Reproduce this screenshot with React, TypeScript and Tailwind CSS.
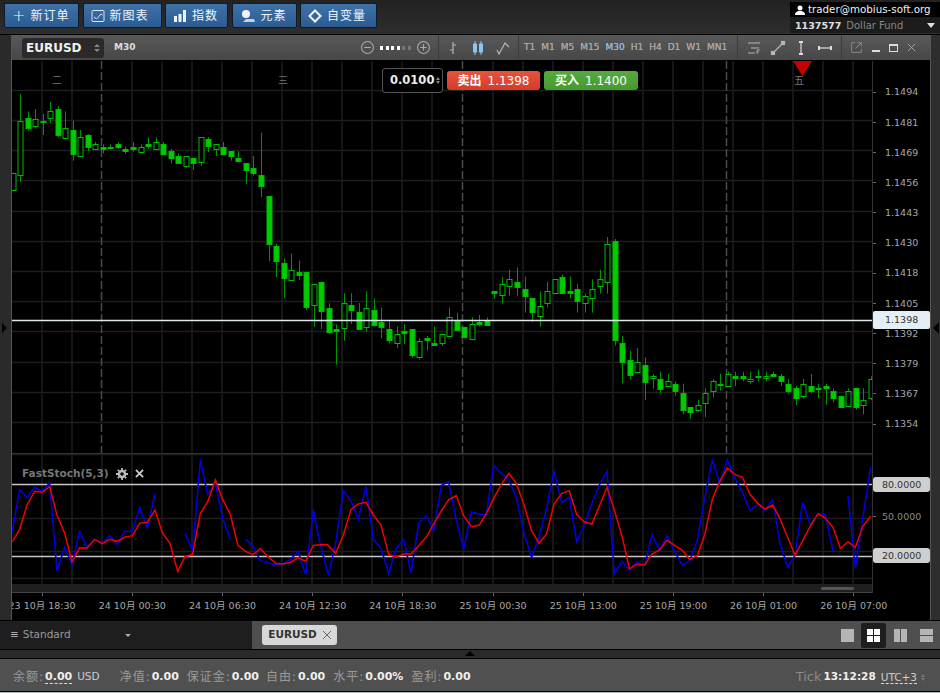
import React from "react";

const FONT = "font-['DejaVu_Sans','Noto_Sans_CJK_SC',sans-serif]";

// [wickTop, bodyTop, bodyBottom, wickBottom, filled] measured on 3x crops
type Candle = [number, number, number, number, number];

const firstRun: Candle[] = [
  [248, 248, 298, 298, 0], [12, 92, 254, 276, 0], [64, 85, 115, 122, 1], [57, 86, 106, 116, 0],
  [72, 92, 96, 135, 1], [36, 64, 85, 99, 0], [48, 56, 134, 141, 1], [64, 114, 143, 143, 0],
  [92, 120, 192, 212, 1], [120, 142, 200, 200, 0], [132, 134, 170, 183, 1], [156, 163, 179, 180, 0],
  [163, 170, 177, 190, 1], [163, 171, 175, 176, 1], [156, 162, 171, 177, 1], [170, 177, 182, 191, 1],
  [156, 170, 177, 185, 1], [163, 170, 185, 191, 0], [142, 163, 170, 177, 1], [142, 156, 177, 178, 0],
  [156, 163, 192, 194, 1], [177, 184, 206, 220, 1], [190, 198, 220, 221, 1], [198, 199, 228, 234, 0],
  [205, 205, 221, 240, 1], [141, 141, 215, 228, 0], [141, 148, 170, 186, 1], [163, 163, 178, 198, 0],
  [156, 170, 191, 192, 1], [184, 184, 200, 212, 1], [184, 205, 213, 215, 1], [220, 220, 241, 282, 1],
  [198, 234, 249, 257, 1], [128, 256, 290, 321, 1], [319, 319, 462, 513, 1], [462, 469, 513, 561, 1],
  [505, 518, 562, 625, 1], [490, 540, 569, 570, 0], [512, 546, 554, 570, 1],
];

const secondRun: Candle[] = [
  [126, 126, 232, 240, 1], [163, 163, 226, 291, 0], [155, 155, 241, 297, 1], [220, 233, 305, 311, 1],
  [283, 298, 305, 404, 1], [190, 220, 296, 332, 0], [190, 226, 242, 282, 1], [219, 247, 297, 297, 1],
  [184, 233, 290, 305, 0], [205, 240, 284, 290, 1], [233, 276, 290, 325, 1], [272, 298, 332, 340, 1],
  [290, 313, 340, 354, 0], [283, 304, 309, 342, 1], [298, 298, 375, 383, 1], [325, 333, 382, 389, 0],
  [318, 325, 332, 361, 1], [290, 340, 347, 347, 1], [313, 313, 340, 347, 0], [233, 262, 319, 319, 0],
  [248, 272, 298, 298, 1], [290, 290, 319, 325, 1], [262, 283, 327, 327, 0], [255, 276, 281, 290, 1],
  [262, 269, 284, 284, 1], [184, 184, 190, 206, 1], [140, 163, 197, 220, 0], [120, 148, 170, 197, 0],
  [112, 155, 170, 197, 1], [140, 177, 197, 248, 1], [205, 205, 248, 276, 1], [184, 227, 256, 290, 0],
  [155, 184, 219, 232, 0], [148, 148, 191, 191, 0], [134, 141, 190, 191, 1], [140, 183, 188, 205, 1],
  [162, 177, 212, 248, 1], [191, 198, 219, 248, 0], [148, 177, 205, 248, 0], [120, 148, 170, 191, 0],
  [21, 42, 155, 191, 0], [27, 34, 332, 347, 1],
];

const thirdRun: Candle[] = [
  [318, 340, 398, 460, 1], [362, 389, 434, 448, 1], [354, 397, 426, 426, 0], [382, 404, 454, 510, 1],
  [432, 439, 446, 476, 0], [425, 447, 476, 489, 1], [432, 454, 469, 469, 0], [454, 461, 482, 497, 1],
  [461, 489, 539, 553, 1], [532, 532, 548, 567, 1], [510, 525, 540, 546, 0], [475, 489, 518, 561, 0],
  [447, 454, 483, 502, 0], [432, 461, 465, 482, 1], [425, 432, 468, 468, 0], [425, 439, 446, 468, 1],
  [425, 439, 446, 454, 1], [425, 447, 454, 461, 0], [418, 439, 443, 454, 1], [425, 439, 446, 454, 0],
  [425, 432, 437, 440, 1], [432, 439, 455, 468, 1], [447, 461, 482, 490, 1], [468, 475, 505, 525, 1],
  [447, 461, 497, 505, 0], [432, 468, 483, 490, 1], [461, 475, 478, 505, 1], [461, 468, 473, 524, 1],
  [475, 482, 503, 518, 1], [497, 497, 531, 532, 1], [475, 482, 526, 526, 0], [475, 475, 533, 539, 1],
  [475, 511, 526, 553, 0], [439, 447, 505, 510, 0],
];

const candles = [
  ...firstRun.map((c, i) => ({ i, c, base: 90 })),
  ...secondRun.map((c, i) => ({ i: i + 39, c, base: 230 })),
  ...thirdRun.map((c, i) => ({ i: i + 81, c, base: 230 })),
];

const line = (pts: number[][], ox: number) =>
  pts.map(([x, y]) => `${ox + x / 3},${450 + y / 3}`).join(" ");

const blueLines = [
  line([[37,243],[59,119],[81,143],[104,112],[126,125],[149,98],[171,363],[194,292],[216,344],[239,244],[261,292],[284,268],[307,280],[329,257],[352,284],[374,244],[397,244],[419,172],[442,234],[465,132]], 0),
  line([[555,250],[578,300],[601,30],[623,133],[646,100],[668,205],[691,268]], 0),
  line([[738,268],[759,288],[781,332],[804,338],[827,345],[849,341],[872,328],[894,304],[917,374],[940,180],[961,284],[985,375],[1007,280],[1030,121],[1053,152],[1075,208],[1098,110],[1120,268],[1143,295],[1166,370],[1188,296],[1211,268],[1233,369],[1256,219],[1279,197],[1301,243],[1324,106],[1346,96],[1369,210],[1391,298],[1414,186],[1437,193],[1459,193],[1481,47],[1504,70],[1527,90],[1550,145],[1572,250],[1595,323],[1617,260],[1640,175],[1662,62],[1685,158],[1708,142],[1730,275],[1753,226],[1776,160],[1798,105],[1821,64],[1843,371],[1866,334],[1888,362],[1911,336],[1934,346],[1956,254],[1979,300],[2001,257],[2024,305],[2047,346],[2069,333],[2092,270],[2114,145],[2137,30],[2159,100],[2182,30],[2205,85],[2227,125],[2250,183],[2273,162],[2295,182],[2318,150],[2340,280],[2363,351],[2385,316],[2408,157],[2431,225],[2454,192],[2476,193],[2499,304]], 0),
  line([[684,137],[706,355],[729,200],[752,52]], 620),
];

const redLine = line([[37,275],[59,238],[81,165],[104,124],[126,127],[149,110],[171,195],[194,250],[216,335],[239,293],[261,294],[284,268],[307,281],[329,268],[352,274],[374,262],[397,257],[419,220],[442,217],[465,180],[487,248],[510,280],[533,364],[555,320],[578,313],[601,190],[623,155],[646,90],[668,148],[691,193],[714,287],[738,305],[759,314],[781,296],[804,320],[827,340],[849,342],[872,337],[894,323],[917,334],[940,286],[961,284],[983,284],[1007,310],[1030,255],[1053,178],[1075,162],[1098,157],[1120,195],[1143,225],[1166,313],[1188,321],[1211,312],[1233,312],[1256,287],[1279,261],[1301,222],[1324,183],[1346,149],[1369,137],[1391,197],[1414,230],[1437,226],[1459,191],[1481,145],[1504,103],[1527,70],[1550,102],[1572,165],[1595,243],[1617,280],[1640,252],[1662,162],[1685,131],[1708,122],[1730,193],[1753,216],[1776,222],[1798,168],[1821,112],[1843,180],[1866,258],[1888,356],[1911,343],[1934,345],[1956,312],[1979,300],[2001,271],[2024,286],[2047,301],[2069,328],[2092,317],[2114,255],[2137,148],[2159,95],[2182,54],[2205,74],[2227,81],[2250,133],[2273,160],[2295,177],[2318,165],[2340,206],[2363,262],[2385,316],[2408,272],[2431,228],[2454,191],[2476,204],[2499,232],[2521,295],[2544,276],[2566,292],[2589,228],[2612,199]], 0);

const verticals = [42, 72, 132, 162, 192, 222, 252, 282, 312, 342, 372, 402, 432, 493, 523, 553, 583, 613, 643, 673, 703, 733, 763, 793, 823, 853];
const dashed = [102, 463, 727];
const mainRows = [91, 121, 151, 181, 212, 242, 272, 302, 332, 363, 393, 423];
const prices = ["1.1494", "1.1481", "1.1469", "1.1456", "1.1443", "1.1430", "1.1418", "1.1405", "1.1392", "1.1379", "1.1367", "1.1354"];
const timeLabels = ["23 10月 18:30", "24 10月 00:30", "24 10月 06:30", "24 10月 12:30", "24 10月 18:30", "25 10月 00:30", "25 10月 13:00", "25 10月 19:00", "26 10月 01:00", "26 10月 07:00"];
const frames = ["T1", "M1", "M5", "M15", "M30", "H1", "H4", "D1", "W1", "MN1"];

const TopButton = ({ label, icon, width }: { label: string; icon: React.ReactNode; width: string }) => (
  <button className={`${width} h-[25px] flex items-center gap-[5px] pl-[7px] border border-[#0d1a2a] rounded-[2px] bg-gradient-to-b from-[#3f72a8] to-[#2b5b91] text-[#f0f4f8] text-[12px]`}>
    {icon}
    <span className="tracking-[1px]">{label}</span>
  </button>
);

const MainChart = () => (
  <svg viewBox="12 61 860 392" className="block w-[860px] h-[392px]">
    {verticals.map((x) => <line key={x} x1={x} x2={x} y1={61} y2={453} stroke="#1e1e1e" strokeWidth={1.5} />)}
    {mainRows.map((y) => <line key={y} x1={12} x2={872} y1={y - 0.5} y2={y - 0.5} stroke="#1e1e1e" strokeWidth={1.5} />)}
    {dashed.map((x) => <line key={x} x1={x - 0.5} x2={x - 0.5} y1={61} y2={453} stroke="#4a4a4a" strokeWidth={1.5} strokeDasharray="8 3" />)}
    {candles.map(({ i, c, base }) => {
      const x = Math.round(12.5 + i * 7.53) + 0.5;
      const [wt, bt, bb, wb, filled] = c;
      return (
        <g key={i} stroke="#00bb00" fill={filled ? "#00cc00" : "#000"}>
          <line x1={x} x2={x} y1={base + wt / 3} y2={base + wb / 3} strokeWidth={1} opacity={0.8} />
          <rect x={x - 2.5} y={Math.round(base + bt / 3) + 0.5} width={5} height={Math.max(1, Math.round((bb - bt) / 3))} strokeWidth={1} />
        </g>
      );
    })}
    <line x1={12} x2={872} y1={320.5} y2={320.5} stroke="#dfe8ea" strokeWidth={1.6} />
    <polygon points="793,61 812,61 802.5,76" fill="#c40000" />
  </svg>
);

const IndicatorChart = () => (
  <svg viewBox="12 454 860 130" className="block w-[860px] h-[130px]">
    {verticals.concat([102, 463]).map((x) => <line key={x} x1={x} x2={x} y1={454} y2={584} stroke="#1e1e1e" strokeWidth={1.5} />)}
    {[454.5, 518.5, 551.5, 578.5].map((y) => <line key={y} x1={12} x2={872} y1={y} y2={y} stroke="#1e1e1e" strokeWidth={1.5} />)}
    <line x1={12} x2={872} y1={484.5} y2={484.5} stroke="#c8c8c8" strokeWidth={1.4} />
    <line x1={12} x2={872} y1={556.5} y2={556.5} stroke="#c8c8c8" strokeWidth={1.4} />
    {blueLines.map((pts, i) => <polyline key={i} points={pts} fill="none" stroke="#0000e6" strokeWidth={1.5} />)}
    <polyline points={redLine} fill="none" stroke="#f00000" strokeWidth={1.5} />
  </svg>
);

const Marker = ({ text, left }: { text: string; left: string }) => (
  <span className={`absolute ${left} top-[15px] text-[10px] leading-none text-[#777]`}>{text}</span>
);

const ToolIcon = ({ children, className }: { children: React.ReactNode; className?: string }) => (
  <svg viewBox="0 0 16 16" className={`w-4 h-4 ${className ?? ""}`} fill="none" stroke="#b5b5b5" strokeWidth="1.2">{children}</svg>
);

const AxisTick = () => <span className="w-[3px] h-px bg-[#666] mr-[9px]" />;

export default function App() {
  return (
    <div className={`w-[940px] h-[693px] flex flex-col overflow-hidden bg-[#2b2b2b] ${FONT}`}>
      {/* top bar */}
      <div className="h-[35px] shrink-0 flex justify-between bg-gradient-to-b from-[#222] to-[#2e2e2e] border-b border-black">
        <div className="flex gap-[3.5px] pl-[4px] pt-[3px]">
          <TopButton width="w-[75px]" label="新订单" icon={<span className="text-[16px] leading-none font-light">+</span>} />
          <TopButton width="w-[79px]" label="新图表" icon={
            <svg viewBox="0 0 14 14" className="w-[14px] h-[14px]" fill="none" stroke="#dbe6f0"><rect x="1" y="1.5" width="12" height="11" rx="1" /><path d="M3 8l2.5 2L10 5l1.5 1" /></svg>
          } />
          <TopButton width="w-[63px]" label="指数" icon={
            <svg viewBox="0 0 14 14" className="w-[14px] h-[14px]" fill="#f0f4f8"><rect x="1" y="7" width="3" height="6" /><rect x="5.5" y="5" width="3" height="8" /><rect x="10" y="1" width="3" height="12" /></svg>
          } />
          <TopButton width="w-[65px]" label="元素" icon={
            <svg viewBox="0 0 16 14" className="w-[16px] h-[14px]" fill="#f0f4f8"><circle cx="6" cy="5" r="4" /><path d="M6 10h8l1 3H3z" fill="#c5d3e0" /></svg>
          } />
          <TopButton width="w-[77px]" label="自变量" icon={
            <svg viewBox="0 0 14 14" className="w-[14px] h-[14px]" fill="none" stroke="#f0f4f8" strokeWidth="2"><path d="M7 1.5L12.5 7 7 12.5 1.5 7z" /></svg>
          } />
        </div>
        <div className="w-[150px] mt-[2px] h-[31px] bg-black flex flex-col pl-[5px] text-[10px] leading-[15px]">
          <div className="flex items-center gap-[3px] text-[#f2f2f2] h-[15px] whitespace-nowrap text-[10.3px]">
            <svg viewBox="0 0 10 10" className="w-[10px] h-[10px]" fill="#fff"><circle cx="5" cy="3" r="2.5" /><path d="M0 10c0-3 2-4 5-4s5 1 5 4z" /></svg>
            <span>trader@mobius-soft.org</span>
          </div>
          <div className="flex items-center h-[16px] bg-[#1c1c1c] -ml-[5px] pl-[5px] pr-[5px]">
            <span className="font-bold text-[9.5px] text-[#e0e0e0]">1137577</span>
            <span className="ml-[5px] text-[#888]">Dollar Fund</span>
            <span className="ml-auto w-0 h-0 border-x-[4px] border-x-transparent border-t-[5px] border-t-[#ddd]" />
          </div>
        </div>
      </div>

      {/* workspace */}
      <div className="h-[585px] shrink-0 flex">
        <div className="w-[12px] shrink-0 flex items-center border-r border-[#555] bg-[#2a2a2a]">
          <span className="ml-[2px] w-0 h-0 border-y-[5px] border-y-transparent border-l-[5px] border-l-black" />
        </div>
        <div className="w-[918px] shrink-0 flex flex-col">
          {/* window toolbar */}
          <div className="h-[26px] shrink-0 flex items-center bg-gradient-to-b from-[#595959] to-[#474747] text-[#aaa] border-b border-black">
            <div className="ml-[10px] w-[82px] h-[20px] rounded-[3px] bg-[#2a2a2a] flex items-center justify-between pl-[4px] pr-[4px]">
              <span className="text-[12px] font-bold text-[#f0f0f0]">EURUSD</span>
              <span className="flex flex-col gap-[2px]">
                <span className="w-0 h-0 border-x-[3px] border-x-transparent border-b-[3px] border-b-[#888]" />
                <span className="w-0 h-0 border-x-[3px] border-x-transparent border-t-[3px] border-t-[#888]" />
              </span>
            </div>
            <span className="ml-[10px] w-[247px] text-[9px] font-bold text-[#ddd]">M30</span>
            <div className="w-[77px] flex items-center gap-[6px]">
              <svg viewBox="0 0 12 12" className="w-[13px] h-[13px]" fill="none" stroke="#aaa"><circle cx="6" cy="6" r="5.5" /><path d="M3 6h6" /></svg>
              <span className="flex gap-[2.5px]">
                {["#fff", "#fff", "#fff", "#fff", "#777", "#777"].map((c, i) => (
                  <span key={i} className="w-[3px] h-[4px]" style={{ backgroundColor: c }} />
                ))}
              </span>
              <svg viewBox="0 0 12 12" className="w-[13px] h-[13px]" fill="none" stroke="#aaa"><circle cx="6" cy="6" r="5.5" /><path d="M3 6h6M6 3v6" /></svg>
            </div>
            <div className="h-full flex items-center gap-[9px] pl-[6px] w-[80px] border-l border-[#3d3d3d]">
              <ToolIcon><path d="M8 2v12M8 5h3M5 10h3" /></ToolIcon>
              <svg viewBox="0 0 16 16" className="w-4 h-4" fill="#8fc4ee" stroke="#8fc4ee"><path d="M5 1v14M11 1v14" /><rect x="3.5" y="4" width="3" height="8" /><rect x="9.5" y="4" width="3" height="8" /></svg>
              <ToolIcon><path d="M2 10l2 4 6-11 4 4" /></ToolIcon>
            </div>
            <div className="h-full w-[219px] flex items-center gap-[6px] pl-[5px] border-l border-[#3d3d3d] text-[9px] text-[#a8a8a8] [text-shadow:0_0_0.5px_#a8a8a8]">
              {frames.map((f) => <span key={f} className={f === "M30" ? "text-[#8fc0ea]" : ""}>{f}</span>)}
            </div>
            <div className="h-full w-[104px] flex items-center justify-around border-l border-[#3d3d3d] pl-[4px] pr-[4px]">
              <ToolIcon><path d="M2 3h12M5 8h8M2 13h7" /><path d="M11 10v4M11 10h3M11 12h2" strokeWidth="0.8" /></ToolIcon>
              <ToolIcon><path d="M3 13L13 3" /><rect x="1.5" y="11.5" width="3" height="3" fill="#b5b5b5" /><rect x="11.5" y="1.5" width="3" height="3" fill="#b5b5b5" /></ToolIcon>
              <ToolIcon><path d="M8 3v10" stroke="#ddd" /><path d="M6 2h4M6 14h4" stroke="#ddd" strokeWidth="2" /></ToolIcon>
              <ToolIcon><path d="M3 8h10" stroke="#ddd" /><path d="M2 6v4M14 6v4" stroke="#ddd" strokeWidth="2" /></ToolIcon>
            </div>
            <div className="h-full flex-1 flex items-center gap-[9px] pl-[8px] border-l border-[#3d3d3d]">
              <ToolIcon className="w-[13px] h-[13px]"><path d="M6 2H2v12h12v-4M9 2h5v5M14 2L7 9" stroke="#888" /></ToolIcon>
              <span className="mt-[6px] w-[8px] h-[2px] bg-[#ddd]" />
              <span className="w-[9px] h-[8px] border border-t-2 border-[#ddd]" />
              <svg viewBox="0 0 10 10" className="w-[9px] h-[9px]" stroke="#aaa"><path d="M1 1l8 8M9 1l-8 8" /></svg>
            </div>
          </div>

          {/* chart area */}
          <div className="flex-1 flex flex-col bg-black relative">
            <div className="flex shrink-0">
              <div className="w-[860px] shrink-0 flex flex-col">
                <MainChart />
                <div className="border-t border-[#333] relative">
                  <IndicatorChart />
                  <div className="absolute left-[10px] top-[12px] flex items-center gap-[7px] text-[10.5px] font-bold text-[#777]">
                    <span>FastStoch(5,3)</span>
                    <svg viewBox="0 0 12 12" className="w-[12px] h-[12px]" fill="none" stroke="#bbb" strokeWidth="2.5"><circle cx="6" cy="6" r="3" /><path d="M6 0v2M6 10v2M0 6h2M10 6h2M1.8 1.8l1.4 1.4M8.8 8.8l1.4 1.4M1.8 10.2l1.4-1.4M8.8 3.2l1.4-1.4" strokeWidth="1.8" /></svg>
                    <svg viewBox="0 0 10 10" className="w-[9px] h-[9px]" stroke="#ccc" strokeWidth="2"><path d="M1 1l8 8M9 1l-8 8" /></svg>
                  </div>
                </div>
                <div className="h-[9px] bg-[#1f1f1f] flex items-center justify-end pr-[18px] border-b border-[#444]">
                  <span className="w-[33px] h-[3px] rounded-full bg-[#555]" />
                </div>
              </div>

              {/* price axis */}
              <div className="flex-1 flex flex-col border-l border-[#333]">
                <div className="h-[392px] pt-[16px] shrink-0 text-[9.5px] text-[#a8a8a8] relative">
                  {prices.map((p) => (
                    <div key={p} className="h-[30.2px] flex items-center leading-none">
                      <AxisTick />{p}
                    </div>
                  ))}
                  <div className="absolute left-0 right-0 top-[250px] h-[18px] rounded-[2px] bg-[#e3eff4] text-[#333] flex items-center pl-[12px]">1.1398</div>
                </div>
                <div className="h-[130px] shrink-0 relative text-[9.5px] text-[#888]">
                  <div className="absolute left-0 right-0 top-[24px] h-[15px] rounded-[3px] bg-[#cfcfcf] text-[#333] pl-[9px] leading-[15px]">80.0000</div>
                  <div className="absolute left-0 top-[56px] flex items-center leading-[15px]"><span className="w-[3px] h-px bg-[#666] mr-[6px]" />50.0000</div>
                  <div className="absolute left-0 right-0 top-[95px] h-[15px] rounded-[3px] bg-[#cfcfcf] text-[#333] pl-[9px] leading-[15px]">20.0000</div>
                </div>
              </div>
            </div>

            {/* time axis runs under the price column too */}
            <div className="flex-1 overflow-hidden">
              <div className="flex -ml-[15px] text-[9.5px] text-[#a8a8a8] whitespace-nowrap">
                {timeLabels.map((t) => (
                  <div key={t} className="w-[90.2px] shrink-0 flex flex-col items-center">
                    <span className="w-px h-[3px] bg-[#666] mb-[3px]" />
                    <span>{t}</span>
                  </div>
                ))}
              </div>
            </div>

            {/* order panel over the chart */}
            <div className="absolute left-[370px] top-[7px] flex items-center gap-[4px]">
              <div className="w-[61px] h-[25px] rounded-[3px] border border-[#555] bg-black text-[#eee] text-[11.5px] font-bold flex items-center pl-[7px]">
                <span>0.0100</span>
                <span className="ml-[2px] flex flex-col gap-[1px]">
                  <span className="w-0 h-0 border-x-[2px] border-x-transparent border-b-[3px] border-b-[#888]" />
                  <span className="w-0 h-0 border-x-[2px] border-x-transparent border-t-[3px] border-t-[#888]" />
                </span>
              </div>
              <div className="w-[93px] h-[19px] rounded-[3px] bg-gradient-to-b from-[#e8533d] to-[#d23c2b] text-white text-[12px] flex items-center justify-center gap-[6px]">
                <span className="font-bold">卖出</span><span>1.1398</span>
              </div>
              <div className="w-[94px] h-[19px] rounded-[3px] bg-gradient-to-b from-[#55ab3e] to-[#46992f] text-white text-[12px] flex items-center justify-center gap-[6px]">
                <span className="font-bold">买入</span><span>1.1400</span>
              </div>
            </div>
            <Marker text="二" left="left-[40px]" />
            <Marker text="三" left="left-[266px]" />
            <Marker text="五" left="left-[782px]" />
          </div>
        </div>
        <div className="flex-1 flex items-center justify-end border-l border-[#555] bg-[#2e2e2e] pr-[1px]">
          <span className="w-0 h-0 border-y-[6px] border-y-transparent border-r-[6px] border-r-black" />
        </div>
      </div>

      {/* tabs */}
      <div className="h-[30px] shrink-0 flex border-y border-black bg-[#4f4f4f]">
        <div className="w-[252px] bg-[#1e1e1e] flex items-center pl-[10px] text-[10.5px] text-[#9a9a9a]">
          <span className="mr-[4px] text-[#bbb]">≡</span>
          <span>Standard</span>
          <span className="ml-[54px] w-0 h-0 border-x-[3px] border-x-transparent border-t-[3px] border-t-[#aaa]" />
        </div>
        <div className="flex-1 flex items-center pl-[10px]">
          <div className="w-[75px] h-[20px] rounded-[3px] bg-[#d8d8d8] flex items-center justify-center gap-[6px] text-[10.5px] font-bold text-[#333]">
            <span>EURUSD</span>
            <svg viewBox="0 0 8 8" className="w-[8px] h-[8px]" stroke="#666"><path d="M0 0l8 8M8 0L0 8" /></svg>
          </div>
          <div className="ml-auto flex items-center pr-[7px] gap-[7px]">
            <span className="w-[13px] h-[13px] bg-[#b5b5b5]" />
            <span className="w-[25px] h-[25px] rounded-[2px] bg-[#1e1e1e] flex items-center justify-center">
              <span className="grid grid-cols-2 gap-[1px] w-[13px] h-[13px]">
                <span className="bg-white" /><span className="bg-white" /><span className="bg-white" /><span className="bg-white" />
              </span>
            </span>
            <span className="ml-[1px] grid grid-cols-2 gap-[1px] w-[13px] h-[13px]">
              <span className="bg-[#b5b5b5]" /><span className="bg-[#b5b5b5]" />
            </span>
            <span className="ml-[6px] grid grid-rows-2 gap-[1px] w-[13px] h-[13px]">
              <span className="bg-[#b5b5b5]" /><span className="bg-[#b5b5b5]" />
            </span>
          </div>
        </div>
      </div>

      {/* splitter */}
      <div className="h-[9px] shrink-0 bg-[#2a2a2a] flex justify-center border-b border-black">
        <span className="w-0 h-0 mt-[1px] border-x-[5px] border-x-transparent border-b-[5px] border-b-black" />
      </div>

      {/* status bar */}
      <div className="flex-1 flex items-center bg-[#505050] border-b border-black pl-[13px] pr-[15px] pt-[4px] text-[11px] text-[#9a9a9a] whitespace-nowrap">
        <span className="text-[12px] tracking-[1px]">余额:</span>
        <b className="ml-[1px] text-[#eee] border-b border-dashed border-[#ddd] leading-[12px]">0.00</b>
        <span className="ml-[5px] text-[10.5px] text-[#ccc]">USD</span>
        <span className="ml-[20px] text-[12px] tracking-[1px]">净值:</span><b className="ml-[1px] text-[#eee]">0.00</b>
        <span className="ml-[8px] text-[12px] tracking-[1px]">保证金:</span><b className="ml-[1px] text-[#eee]">0.00</b>
        <span className="ml-[7px] text-[12px] tracking-[1px]">自由:</span><b className="ml-[1px] text-[#eee]">0.00</b>
        <span className="ml-[8px] text-[12px] tracking-[1px]">水平:</span><b className="ml-[1px] text-[#eee]">0.00%</b>
        <span className="ml-[8px] text-[12px] tracking-[1px]">盈利:</span><b className="ml-[1px] text-[#eee]">0.00</b>
        <span className="ml-auto text-[13px] text-[#8a8a8a]">Tick</span>
        <b className="ml-[2px] text-[10.5px] text-[#eee]">13:12:28</b>
        <span className="ml-[5px] text-[10.5px] text-[#ccc] border-b border-dashed border-[#ddd] leading-[12px]">UTC+3</span>
        <span className="ml-[4px] flex flex-col gap-[1px]">
          <span className="w-0 h-0 border-x-[2px] border-x-transparent border-b-[3px] border-b-[#777]" />
          <span className="w-0 h-0 border-x-[2px] border-x-transparent border-t-[3px] border-t-[#777]" />
        </span>
      </div>
      <div className="h-px shrink-0 bg-[#b8bdc0]" />
    </div>
  );
}
